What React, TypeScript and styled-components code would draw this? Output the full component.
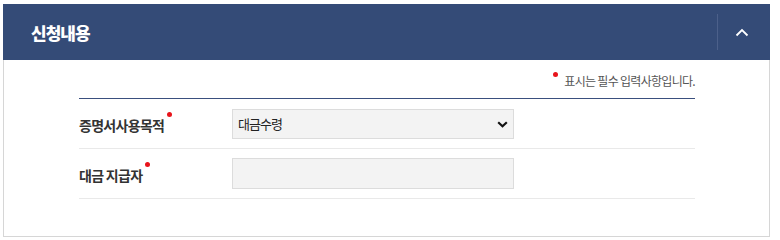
import { createGlobalStyle } from "styled-components"
import styled from "styled-components"

const GlobalStyle = createGlobalStyle`
  html, body {
    margin: 0;
    padding: 0;
    background: #fff;
  }
  body {
    font-family: "Noto Sans CJK KR", "Noto Sans", sans-serif;
    color: #333;
  }
  * { box-sizing: border-box; }
`

const Page = styled.div`
  padding: 4px 10px 0 3px;
`

const Panel = styled.section`
  width: 767px;
`

const Header = styled.header`
  height: 56px;
  background: #344b77;
  display: flex;
  align-items: center;
  justify-content: space-between;
`

const Title = styled.h2`
  margin: 0 0 0 28px;
  color: #fff;
  font-size: 17px;
  font-weight: 900;
  letter-spacing: -1px;
`

const ToggleButton = styled.button`
  width: 53px;
  height: 36px;
  border: 0;
  border-left: 1px solid #4c608a;
  background: transparent;
  display: flex;
  align-items: center;
  justify-content: center;
  padding: 0 5px 0 0;
  cursor: pointer;
`

const Body = styled.div`
  border: 1px solid #d6d6d6;
  border-top: 0;
  padding: 0 74px 37px 75px;
`

const Note = styled.p`
  margin: 0;
  height: 38px;
  display: flex;
  justify-content: flex-end;
  align-items: center;
  padding-top: 2px;
  font-size: 12px;
  letter-spacing: -0.7px;
  color: #555;
`

const Dot = styled.i`
  display: inline-block;
  width: 5px;
  height: 5px;
  border-radius: 50%;
  background: #e8141b;
  margin-right: 6px;
  transform: translateY(-6px);
`

const Form = styled.div`
  border-top: 1px solid #3a4f7e;
`

const Row = styled.div`
  height: 50px;
  display: flex;
  align-items: center;
  border-bottom: 1px solid #e9e9e9;
`

const Label = styled.label`
  width: 153px;
  flex: none;
`

const LabelText = styled.span`
  position: relative;
  display: inline-block;
  font-size: 14px;
  font-weight: 700;
  color: #333;
  letter-spacing: -0.7px;
  white-space: pre;

  &::after {
    content: "";
    position: absolute;
    right: -8px;
    top: -3px;
    width: 5px;
    height: 5px;
    border-radius: 50%;
    background: #e8141b;
  }
`

const SelectWrap = styled.div`
  position: relative;
  width: 282px;
  height: 30px;
`

const Select = styled.select`
  appearance: none;
  width: 100%;
  height: 100%;
  border: 1px solid #dcdcdc;
  background: #f3f3f3;
  padding: 0 0 0 5px;
  font-family: inherit;
  font-size: 13px;
  letter-spacing: -1px;
  color: #222;
  outline: none;
`

const Caret = styled.svg`
  position: absolute;
  right: 6px;
  top: 12px;
  pointer-events: none;
`

const Input = styled.input`
  width: 282px;
  height: 31px;
  border: 1px solid #dcdcdc;
  background: #f3f3f3;
  outline: none;
`

export default function App() {
  return (
    <>
      <GlobalStyle />
      <Page>
        <Panel>
          <Header>
            <Title>신청내용</Title>
            <ToggleButton aria-label="접기">
              <svg width="14" height="9" viewBox="0 0 14 9">
                <path d="M1.5 7.5 L7 2 L12.5 7.5" fill="none" stroke="#fff" strokeWidth="1.8" />
              </svg>
            </ToggleButton>
          </Header>
          <Body>
            <Note>
              <Dot />
              표시는 필수 입력사항입니다.
            </Note>
            <Form>
              <Row>
                <Label><LabelText>증명서사용목적</LabelText></Label>
                <SelectWrap>
                  <Select defaultValue="대금수령">
                    <option>대금수령</option>
                  </Select>
                  <Caret width="11" height="7" viewBox="0 0 11 7">
                    <path d="M1.2 1.2 L5.5 5.2 L9.8 1.2" fill="none" stroke="#111" strokeWidth="2.2" />
                  </Caret>
                </SelectWrap>
              </Row>
              <Row>
                <Label><LabelText>대금 지급자</LabelText></Label>
                <Input />
              </Row>
            </Form>
          </Body>
        </Panel>
      </Page>
    </>
  )
}
